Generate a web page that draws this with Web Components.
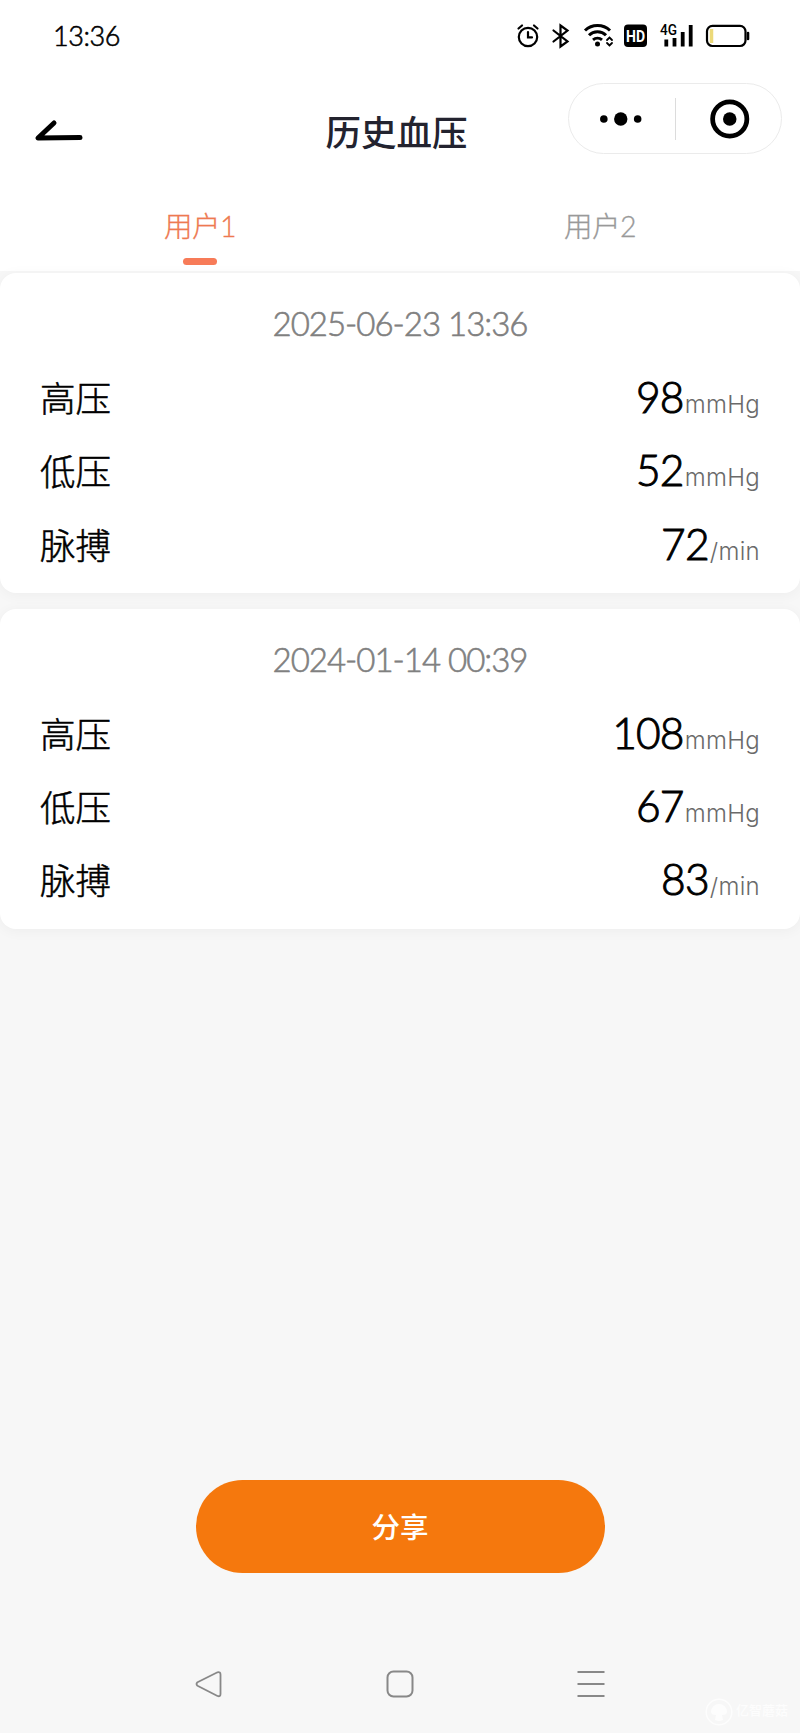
<!DOCTYPE html>
<html lang="zh-CN">
<head>
<meta charset="UTF-8">
<meta name="viewport" content="width=device-width, initial-scale=1.0">
<title>历史血压</title>
<style>
  body {
    margin: 0;
    background: #f7f7f7;
    font-family: Lato, "Noto Sans CJK SC", sans-serif;
    color: #000;
  }
</style>
</head>
<body>
<bp-page>
  <status-bar time="13:36"></status-bar>
  <nav-header>历史血压</nav-header>
  <user-tabs tabs='["用户1","用户2"]' active="0"></user-tabs>
  <record-card date="2025-06-23 13:36" high="98" low="52" pulse="72"></record-card>
  <record-card date="2024-01-14 00:39" high="108" low="67" pulse="83"></record-card>
  <share-button slot="footer">分享</share-button>
  <system-nav slot="footer"></system-nav>
</bp-page>

<script>
class BpPage extends HTMLElement {
    constructor() {
        super();
        this.attachShadow({ mode: 'open' });
    }

    connectedCallback() {
        this.shadowRoot.innerHTML = `
      <style>
        :host {
          display: flex;
          flex-direction: column;
          width: 800px;
          height: 1733px;
          overflow: hidden;
        }
        main {
          flex: 1;
        }
      </style>
      <main><slot></slot></main>
      <footer><slot name="footer"></slot></footer>
    `;
    }
}

class StatusBar extends HTMLElement {
    constructor() {
        super();
        this.attachShadow({ mode: 'open' });
    }

    connectedCallback() {
        const time = this.getAttribute('time') || '00:00';

        this.shadowRoot.innerHTML = `
      <style>
        :host {
          display: flex;
          justify-content: space-between;
          align-items: center;
          box-sizing: border-box;
          height: 72px;
          padding: 0 50px 0 53px;
          background: #fff;
        }
        .time {
          font-size: 27px;
          line-height: 32px;
          font-weight: 300;
          letter-spacing: -0.4px;
          -webkit-text-stroke: 0.6px currentColor;
        }
        svg {
          display: block;
        }
        text {
          font-family: Roboto, sans-serif;
        }
      </style>
      <span class="time">${time}</span>
      <svg width="236" height="28" viewBox="514 22 236 28" fill="none" stroke="#000" stroke-width="2.2" stroke-linecap="round">
        <circle cx="528" cy="37" r="9.2"></circle>
        <path d="M528 32v5.4h4M518.5 28.5l3.5-3M537.5 28.5l-3.5-3"></path>
        <path d="M553.5 30.5l14 11-7 5V25.5l7 5-14 11"></path>
        <path d="M585 30.5a18 18 0 0 1 25 0M589 35.3a12 12 0 0 1 17 0M593 39.8a7 7 0 0 1 9 0" stroke-width="3" stroke-linecap="butt"></path>
        <circle cx="597.5" cy="44" r="2.5" fill="#000" stroke="none"></circle>
        <path d="M607 40l2.5-2.5 2.5 2.5M607 43l2.5 2.5 2.5-2.5" stroke-width="1.8"></path>
        <rect x="624" y="24.5" width="23" height="22.5" rx="4" fill="#000" stroke="none"></rect>
        <text x="635.5" y="41.5" text-anchor="middle" font-size="16.5" font-weight="700" fill="#fff" stroke="none" textLength="19" lengthAdjust="spacingAndGlyphs">HD</text>
        <text x="660" y="35" font-size="14.5" font-weight="500" fill="#000" stroke="none" textLength="17" lengthAdjust="spacingAndGlyphs">4G</text>
        <path d="M666.3 39.5v7M674.5 38v8.5M682.7 32v14.5M690.7 25v21.5" stroke-width="3.8" stroke-linecap="butt"></path>
        <rect x="707" y="25.8" width="38.5" height="20.2" rx="5.5"></rect>
        <path d="M748 33v6" stroke-width="2.6"></path>
        <path d="M711.5 29v14" stroke="#ecd979" stroke-width="3.5" stroke-linecap="butt"></path>
      </svg>
    `;
    }
}

class NavHeader extends HTMLElement {
    constructor() {
        super();
        this.attachShadow({ mode: 'open' });
    }

    connectedCallback() {
        this.shadowRoot.innerHTML = `
      <style>
        :host {
          display: grid;
          grid-template-columns: 1fr auto 1fr;
          box-sizing: border-box;
          height: 118px;
          padding: 11px 18px 0;
          background: #fff;
        }
        .back {
          margin: 36px 0 0 16px;
        }
        h1 {
          margin: 24px 7px 0 0;
          font-size: 35.5px;
          line-height: 52px;
          font-weight: 500;
          color: #23232f;
        }
        .capsule {
          justify-self: end;
          display: flex;
          align-items: center;
          box-sizing: border-box;
          width: 214px;
          height: 71px;
          border: 1.5px solid #ebebeb;
          border-radius: 36px;
        }
        .capsule svg {
          flex: 1;
        }
        .divider {
          width: 1px;
          height: 42px;
          background: #dcdcdc;
        }
      </style>
      <svg class="back" width="50" height="24" viewBox="34 120 50 24" fill="none" stroke="#000" stroke-width="5" stroke-linecap="round" stroke-linejoin="round"><path d="M54 124L38 139L80 138.5"></path></svg>
      <h1><slot></slot></h1>
      <div class="capsule">
        <svg width="106" height="40" viewBox="0 0 106 40"><circle cx="35" cy="20" r="3.8"></circle><circle cx="52" cy="20" r="6.7"></circle><circle cx="69" cy="20" r="3.8"></circle></svg>
        <div class="divider"></div>
        <svg width="106" height="40" viewBox="0 0 106 40"><circle cx="54" cy="20" r="17.2" fill="none" stroke="#000" stroke-width="4.8"></circle><circle cx="54" cy="20" r="6.8"></circle></svg>
      </div>
    `;
    }
}

class UserTabs extends HTMLElement {
    constructor() {
        super();
        this.attachShadow({ mode: 'open' });
    }

    connectedCallback() {
        const tabs = JSON.parse(this.getAttribute('tabs') || '[]');
        const active = Number(this.getAttribute('active') || 0);

        this.shadowRoot.innerHTML = `
      <style>
        :host {
          display: flex;
          box-sizing: border-box;
          height: 83px;
          background: #fff;
          border-bottom: 2px solid #f7f7f7;
        }
        .tab {
          flex: 1;
          display: flex;
          flex-direction: column;
          align-items: center;
          padding-top: 15.5px;
          font-size: 28.5px;
          line-height: 40px;
          font-weight: 300;
          letter-spacing: -0.5px;
          color: #999;
          -webkit-text-stroke: 0.3px currentColor;
        }
        .tab.active {
          color: #ee7950;
        }
        .tab.active::after {
          content: "";
          width: 34px;
          height: 7px;
          margin-top: 12px;
          border-radius: 4px;
          background: #f77b58;
        }
      </style>
      ${tabs.map((t, i) => `<div class="tab${i === active ? ' active' : ''}">${t}</div>`).join('')}
    `;
    }
}

class RecordCard extends HTMLElement {
    constructor() {
        super();
        this.attachShadow({ mode: 'open' });
    }

    connectedCallback() {
        const date = this.getAttribute('date') || '';
        const rows = [
            { label: '高压', value: this.getAttribute('high'), unit: 'mmHg' },
            { label: '低压', value: this.getAttribute('low'), unit: 'mmHg' },
            { label: '脉搏', value: this.getAttribute('pulse'), unit: '/min' }
        ];

        this.shadowRoot.innerHTML = `
      <style>
        :host {
          display: block;
          box-sizing: border-box;
          height: 320px;
          margin-bottom: 15.5px;
          padding: 26px 40px 0;
          background: #fff;
          border-radius: 16px;
          box-shadow: 0 2px 14px rgba(0, 0, 0, 0.045);
        }
        .date {
          height: 62px;
          text-align: center;
          font-size: 33px;
          line-height: 48px;
          font-weight: 300;
          letter-spacing: -1px;
          color: #808080;
          -webkit-text-stroke: 0.6px currentColor;
        }
        .row {
          display: flex;
          justify-content: space-between;
          height: 73.3px;
          line-height: 73px;
        }
        .label {
          margin-top: 1px;
          font-size: 35.5px;
          font-weight: 300;
          -webkit-text-stroke: 0.5px currentColor;
        }
        .reading {
          margin-top: -1px;
        }
        .value {
          font-size: 42.5px;
          font-weight: 300;
          letter-spacing: -0.8px;
          -webkit-text-stroke: 1px currentColor;
        }
        .unit {
          margin-left: 1px;
          font-family: Inter, sans-serif;
          font-size: 24px;
          font-weight: 300;
          letter-spacing: 0.3px;
          color: #6a6a6a;
        }
      </style>
      <div class="date">${date}</div>
      ${rows.map(r => `<div class="row"><span class="label">${r.label}</span><span class="reading"><span class="value">${r.value}</span><span class="unit">${r.unit}</span></span></div>`).join('')}
    `;
    }
}

class ShareButton extends HTMLElement {
    constructor() {
        super();
        this.attachShadow({ mode: 'open' });
    }

    connectedCallback() {
        this.shadowRoot.innerHTML = `
      <style>
        :host {
          display: block;
          width: 409px;
          margin: 0 auto 67px;
        }
        button {
          display: block;
          width: 100%;
          height: 93px;
          padding: 0 0 2px;
          border: 0;
          border-radius: 47px;
          background: #f5780d;
          color: #fff;
          font: inherit;
          font-size: 28.5px;
          font-weight: 500;
        }
      </style>
      <button><slot></slot></button>
    `;
    }
}

class SystemNav extends HTMLElement {
    constructor() {
        super();
        this.attachShadow({ mode: 'open' });
    }

    connectedCallback() {
        this.shadowRoot.innerHTML = `
      <style>
        :host {
          display: block;
          position: relative;
          height: 93px;
        }
        nav {
          display: flex;
          justify-content: space-between;
          padding: 29px 194px 0;
        }
        .mark {
          position: absolute;
          right: 12px;
          bottom: 7px;
          display: flex;
          align-items: center;
          gap: 3px;
          color: rgba(255, 255, 255, 0.75);
          font-size: 13px;
          line-height: 20px;
          font-weight: 500;
        }
        .mark span {
          padding-bottom: 4px;
        }
      </style>
      <nav>
        <svg width="30" height="30" viewBox="0 0 30 30" fill="none" stroke="#888" stroke-width="1.8" stroke-linejoin="round"><path d="M3.5 13.3L23.5 3.3Q26.5 2.5 26.5 5.5V25Q26.5 28 23.5 27L3.5 16.7Q1.5 15 3.5 13.3Z"></path></svg>
        <svg width="30" height="30" viewBox="0 0 30 30" fill="none" stroke="#888" stroke-width="2"><rect x="2.5" y="2.5" width="25" height="25" rx="6"></rect></svg>
        <svg width="30" height="30" viewBox="0 0 30 30" fill="none" stroke="#888" stroke-width="2"><path d="M1.5 3h27M1.5 15h27M1.5 27h27"></path></svg>
      </nav>
      <div class="mark">
        <svg width="28" height="28" viewBox="0 0 28 28" fill="currentColor"><circle cx="14" cy="14" r="12.8" fill="none" stroke="currentColor" stroke-width="1.5"></circle><path d="M6 14a8 8 0 0 1 16 0q0 3-5 3l1 5q-4 2-8 0l1-5q-5 0-5-3z"></path></svg>
        <span>亿智蘑菇</span>
      </div>
    `;
    }
}

customElements.define('bp-page', BpPage);
customElements.define('status-bar', StatusBar);
customElements.define('nav-header', NavHeader);
customElements.define('user-tabs', UserTabs);
customElements.define('record-card', RecordCard);
customElements.define('share-button', ShareButton);
customElements.define('system-nav', SystemNav);
</script>
</body>
</html>
